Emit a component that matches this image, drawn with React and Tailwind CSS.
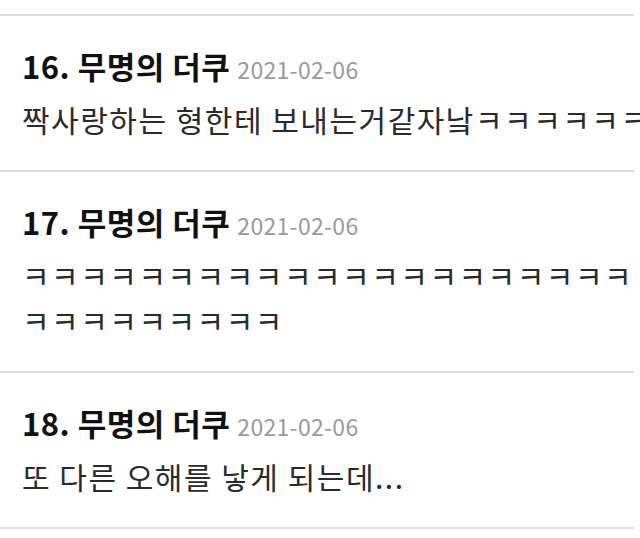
const comments = [
  {
    no: 16,
    name: '무명의 더쿠',
    date: '2021-02-06',
    lines: ['짝사랑하는 형한테 보내는거같자낰ㅋㅋㅋㅋㅋㅋㅋㅋㅋ'],
  },
  {
    no: 17,
    name: '무명의 더쿠',
    date: '2021-02-06',
    lines: ['ㅋ'.repeat(21), 'ㅋ'.repeat(9)],
  },
  {
    no: 18,
    name: '무명의 더쿠',
    date: '2021-02-06',
    lines: ['또 다른 오해를 낳게 되는데...'],
  },
];

const Comment = ({ no, name, date, lines }) => {
  return (
    <li className="border-b-2 border-[#dedede] pl-[22px] pt-[30px] pb-[28px]">
      <div className="flex items-baseline whitespace-nowrap leading-[40px]">
        <span className="text-[31px] font-bold text-[#111] tracking-[0.5px]">
          {no}. {name}
        </span>
        <span className="ml-[7px] text-[23px] text-[#9a9a9a] tracking-[0.3px]">{date}</span>
      </div>
      <div className="mt-[8px] text-[30px] leading-[45px] text-[#2a2a2a] tracking-[1.5px]">
        {lines.map((line, i) => (
          <p key={i} className="whitespace-nowrap">{line}</p>
        ))}
      </div>
    </li>
  );
};

export default function App() {
  return (
    <div
      className="w-[640px] h-[538px] overflow-hidden bg-white pt-[14px]"
      style={{ fontFamily: '"Noto Sans CJK KR", "Noto Sans", sans-serif' }}
    >
      <ul className="w-[634px] border-t-2 border-[#dedede]">
        {comments.map((c) => (
          <Comment key={c.no} {...c} />
        ))}
      </ul>
    </div>
  );
}
